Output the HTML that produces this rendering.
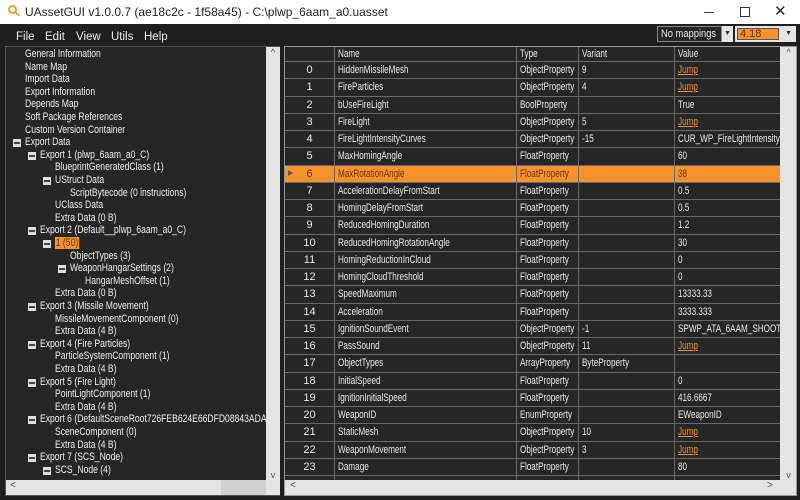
<!DOCTYPE html>
<html><head><meta charset="utf-8"><style>
*{margin:0;padding:0;box-sizing:border-box}
body{width:800px;height:500px;background:#1f1f1f;font-family:"Liberation Sans",sans-serif;font-size:11px;color:#e8e8e8;position:relative;overflow:hidden}
.a{position:absolute}
.title{left:0;top:0;width:800px;height:24px;background:#fff;color:#222;font-size:12px}
.menu span{position:absolute;top:31px;font-size:11.5px;color:#eee}
.tree{left:5px;top:46px;width:275px;height:450px;background:#262626;border:1px solid #555}
.ti{position:absolute;white-space:nowrap;font-size:11px;color:#eee;transform:scaleX(.78);transform-origin:0 0}
.box{position:absolute;width:8px;height:8px;background:#ddd}
.box:after{content:"";position:absolute;left:1px;top:3px;width:6px;height:2px;background:#444}
.grid{left:284px;top:46px;width:513px;height:450px;background:#262626;border:1px solid #999;overflow:hidden}
.row{position:absolute;left:0;width:495px;height:17.25px;border-bottom:1px solid #6a6a6a}
.c{position:absolute;top:0;height:100%;border-right:1px solid #6a6a6a;padding-left:3px;line-height:16px;white-space:nowrap;overflow:hidden;font-size:11px}
.s{display:inline-block;transform:scaleX(.74);transform-origin:0 0}
.c0{left:0;width:50px;text-align:center;padding-left:0}
.c1{left:50px;width:182px}
.c2{left:232px;width:62px}
.c3{left:294px;width:96px}
.c4{left:390px;width:105px;border-right:none}
.j{color:#f0902a;text-decoration:underline}
.sel{background:#f7922c;color:#6b3000}
.sb{background:#e4e4e4;z-index:5}
</style></head><body>
<div class="a title">
<div class="a" style="left:8px;top:5px;width:9px;height:9px;border:2px solid #e8a040;border-radius:50%"></div>
<div class="a" style="left:15px;top:13px;width:5px;height:2px;background:#e8a040;transform:rotate(45deg)"></div>
<div class="a" style="left:25px;top:5px">UAssetGUI v1.0.0.7 (ae18c2c - 1f58a45) - C:\plwp_6aam_a0.uasset</div>
<div class="a" style="left:704px;top:12px;width:10px;height:1px;background:#333"></div>
<div class="a" style="left:740px;top:7px;width:10px;height:10px;border:1px solid #333"></div>
<div class="a" style="left:774px;top:2px;font-size:15px">✕</div>
</div>
<div class="menu"><span style="left:16px">File</span><span style="left:45px">Edit</span><span style="left:76px">View</span><span style="left:111px">Utils</span><span style="left:144px">Help</span></div>
<div class="a" style="left:657px;top:26px;width:65px;height:16px;background:#262626;border:1px solid #888;padding-left:3px;line-height:14px;white-space:nowrap;overflow:hidden"><span class="s" style="transform:scaleX(.85)">No mappings</span></div>
<div class="a sb" style="left:722px;top:26px;width:11px;height:16px;color:#333;font-size:7px;text-align:center;line-height:16px">▼</div>
<div class="a" style="left:735px;top:26px;width:46px;height:16px;background:#e4e4e4;padding:2px"><div style="background:#f7922c;border:1px solid #555;height:12px;line-height:10px;padding-left:2px;color:#6b3000">4.18</div></div>
<div class="a sb" style="left:781px;top:26px;width:15px;height:16px;color:#333;font-size:7px;text-align:center;line-height:16px">▼</div>

<div class="a tree">
<div class="a sb" style="left:260px;top:0;width:14px;height:433px"><div style="text-align:center;color:#555;font-size:9px">^</div><div style="position:absolute;bottom:0;width:14px;text-align:center;color:#555;font-size:9px">v</div></div>
<div class="a sb" style="left:0;top:433px;width:274px;height:15px;color:#555;font-size:10px"><span style="position:absolute;left:4px">&lt;</span><span style="position:absolute;left:250px">&gt;</span></div>
<div class="a" style="left:215px;top:433px;width:45px;height:15px;background:#d0d0d0;z-index:6"></div>
</div>
<div id="t"></div>

<div class="a grid">
<div id="g"></div>
<div class="a sb" style="left:495px;top:0;width:17px;height:433px"><div style="text-align:center;color:#555;font-size:9px">^</div><div style="position:absolute;bottom:0;width:17px;text-align:center;color:#555;font-size:9px">v</div></div>
<div class="a sb" style="left:0;top:433px;width:512px;height:16px;color:#555;font-size:10px"><span style="position:absolute;left:5px">&lt;</span><span style="position:absolute;left:482px">&gt;</span></div>
</div>
<script>
var T=[[0,"General Information"],[0,"Name Map"],[0,"Import Data"],[0,"Export Information"],[0,"Depends Map"],[0,"Soft Package References"],[0,"Custom Version Container"],[0,"Export Data",1],[1,"Export 1 (plwp_6aam_a0_C)",1],[2,"BlueprintGeneratedClass (1)"],[2,"UStruct Data",1],[3,"ScriptBytecode (0 instructions)"],[2,"UClass Data"],[2,"Extra Data (0 B)"],[1,"Export 2 (Default__plwp_6aam_a0_C)",1],[2,"1 (50)",1,1],[3,"ObjectTypes (3)"],[3,"WeaponHangarSettings (2)",1],[4,"HangarMeshOffset (1)"],[2,"Extra Data (0 B)"],[1,"Export 3 (Missile Movement)",1],[2,"MissileMovementComponent (0)"],[2,"Extra Data (4 B)"],[1,"Export 4 (Fire Particles)",1],[2,"ParticleSystemComponent (1)"],[2,"Extra Data (4 B)"],[1,"Export 5 (Fire Light)",1],[2,"PointLightComponent (1)"],[2,"Extra Data (4 B)"],[1,"Export 6 (DefaultSceneRoot726FEB624E66DFD08843ADAB",1],[2,"SceneComponent (0)"],[2,"Extra Data (4 B)"],[1,"Export 7 (SCS_Node)",1],[2,"SCS_Node (4)",1]];
var h="";T.forEach(function(e,i){var y=48+i*12.6,x=25+e[0]*15;
if(e[2])h+='<div class="box" style="left:'+(x-12)+'px;top:'+(y+3)+'px"></div>';
h+='<div class="ti" style="left:'+x+'px;top:'+y+'px;max-width:'+((270-x)/0.78)+'px;overflow:hidden'+(e[3]?';background:#f7922c;color:#6b3000;padding:0 1px':'')+'">'+e[1]+'</div>';});
document.getElementById('t').innerHTML=h;
var G=[["HiddenMissileMesh","ObjectProperty","9","J"],["FireParticles","ObjectProperty","4","J"],["bUseFireLight","BoolProperty","","True"],["FireLight","ObjectProperty","5","J"],["FireLightIntensityCurves","ObjectProperty","-15","CUR_WP_FireLightIntensity"],["MaxHomingAngle","FloatProperty","","60"],["MaxRotationAngle","FloatProperty","","38"],["AccelerationDelayFromStart","FloatProperty","","0.5"],["HomingDelayFromStart","FloatProperty","","0.5"],["ReducedHomingDuration","FloatProperty","","1.2"],["ReducedHomingRotationAngle","FloatProperty","","30"],["HomingReductionInCloud","FloatProperty","","0"],["HomingCloudThreshold","FloatProperty","","0"],["SpeedMaximum","FloatProperty","","13333.33"],["Acceleration","FloatProperty","","3333.333"],["IgnitionSoundEvent","ObjectProperty","-1","SPWP_ATA_6AAM_SHOOT"],["PassSound","ObjectProperty","11","J"],["ObjectTypes","ArrayProperty","ByteProperty",""],["InitialSpeed","FloatProperty","","0"],["IgnitionInitialSpeed","FloatProperty","","416.6667"],["WeaponID","EnumProperty","","EWeaponID"],["StaticMesh","ObjectProperty","10","J"],["WeaponMovement","ObjectProperty","3","J"],["Damage","FloatProperty","","80"],["","","",""]];
function s(t){return '<span class="s">'+t+'</span>';}
var g='<div class="row" style="top:0;height:15px"><div class="c c0"></div><div class="c c1" style="line-height:14px">'+s('Name')+'</div><div class="c c2" style="line-height:14px">'+s('Type')+'</div><div class="c c3" style="line-height:14px">'+s('Variant')+'</div><div class="c c4" style="line-height:14px">'+s('Value')+'</div></div>';
G.forEach(function(r,i){var v=r[3]=="J"?'<span class="j">Jump</span>':r[3];
g+='<div class="row'+(i==6?' sel':'')+'" style="top:'+(15+i*17.25)+'px"><div class="c c0">'+(i==6?'<span style="position:absolute;left:3px;font-size:7px;color:#555">▶</span>':'')+(i<24?i:'')+'</div><div class="c c1">'+s(r[0])+'</div><div class="c c2">'+s(r[1])+'</div><div class="c c3">'+s(r[2])+'</div><div class="c c4">'+s(v)+'</div></div>';});
document.getElementById('g').innerHTML=g;
</script>
</body></html>
